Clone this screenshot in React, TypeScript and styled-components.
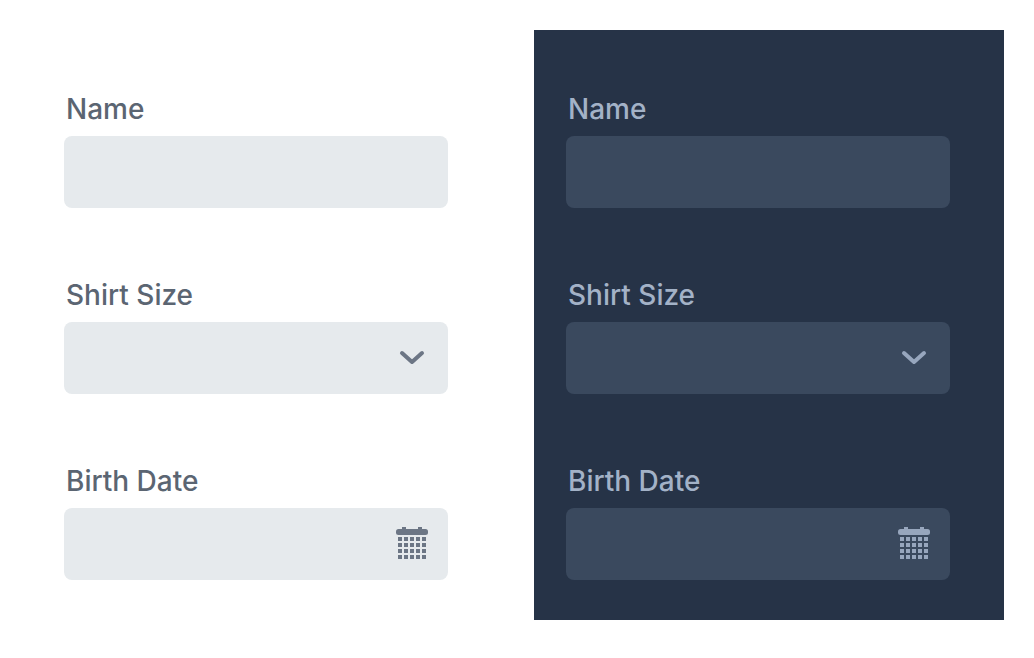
import React, { useId } from "react";
import styled, { createGlobalStyle, ThemeProvider } from "styled-components";

const light = { panel: "#ffffff", field: "#e6eaed", label: "#5b6572", icon: "#6c7685" };
const dark = { panel: "#263347", field: "#3a495e", label: "#a3b2c7", icon: "#97a6bd" };

const GlobalStyle = createGlobalStyle`
  * { box-sizing: border-box; }
  body { margin: 0; background: #ffffff; font-family: Inter, "Liberation Sans", sans-serif; }
`;

const Page = styled.main`
  display: grid;
  grid-template-columns: 1fr 1fr;
  gap: 32px;
  padding: 30px 30px 38px 32px;
`;

const Panel = styled.form`
  display: flex;
  flex-direction: column;
  gap: 70px;
  padding: 62px 54px 40px 32px;
  background: ${({ theme }) => theme.panel};
`;

const Field = styled.div`
  display: flex;
  flex-direction: column;
  gap: 10px;
`;

const Label = styled.label`
  padding-left: 2px;
  font-size: 28px;
  line-height: 34px;
  font-weight: 500;
  color: ${({ theme }) => theme.label};
`;

const Control = styled.div`
  display: grid;
  align-items: center;
  height: 72px;
  border-radius: 8px;
  background: ${({ theme }) => theme.field};
  color: ${({ theme }) => theme.icon};

  > * { grid-area: 1 / 1; }
  > svg { justify-self: end; margin-right: 20px; pointer-events: none; }
`;

const TextInput = styled.input`
  width: 100%;
  height: 100%;
  padding: 0 20px;
  border: 0;
  border-radius: 8px;
  background: transparent;
  color: ${({ theme }) => theme.label};
  font: inherit;
  font-size: 28px;
`;

const Select = styled(TextInput).attrs({ as: "select" })`
  appearance: none;
`;

const Chevron = () => (
  <svg width="32" height="32" viewBox="0 0 32 32" fill="none" aria-hidden="true">
    <path d="M6 11 16 20 26 11" stroke="currentColor" strokeWidth="4" strokeLinecap="round" strokeLinejoin="round" />
  </svg>
);

const Calendar = () => (
  <svg width="32" height="34" viewBox="0 0 32 34" fill="currentColor" aria-hidden="true">
    <rect x="6" y="0" width="4" height="4" />
    <rect x="22" y="0" width="4" height="4" />
    <rect x="0" y="2" width="32" height="6" rx="2.5" />
    {[10, 16, 22, 28].map((y) =>
      [2, 8, 14, 20, 26].map((x) => <rect key={`${x}-${y}`} x={x} y={y} width="4" height="4" />)
    )}
  </svg>
);

const ProfileForm = () => {
  const id = useId();
  return (
    <Panel>
      <Field>
        <Label htmlFor={`${id}-name`}>Name</Label>
        <Control><TextInput id={`${id}-name`} type="text" /></Control>
      </Field>
      <Field>
        <Label htmlFor={`${id}-size`}>Shirt Size</Label>
        <Control>
          <Select id={`${id}-size`}><option value="" /></Select>
          <Chevron />
        </Control>
      </Field>
      <Field>
        <Label htmlFor={`${id}-birth`}>Birth Date</Label>
        <Control>
          <TextInput id={`${id}-birth`} type="text" />
          <Calendar />
        </Control>
      </Field>
    </Panel>
  );
};

export default function App() {
  return (
    <>
      <GlobalStyle />
      <Page>
        <ThemeProvider theme={light}><ProfileForm /></ThemeProvider>
        <ThemeProvider theme={dark}><ProfileForm /></ThemeProvider>
      </Page>
    </>
  );
}
